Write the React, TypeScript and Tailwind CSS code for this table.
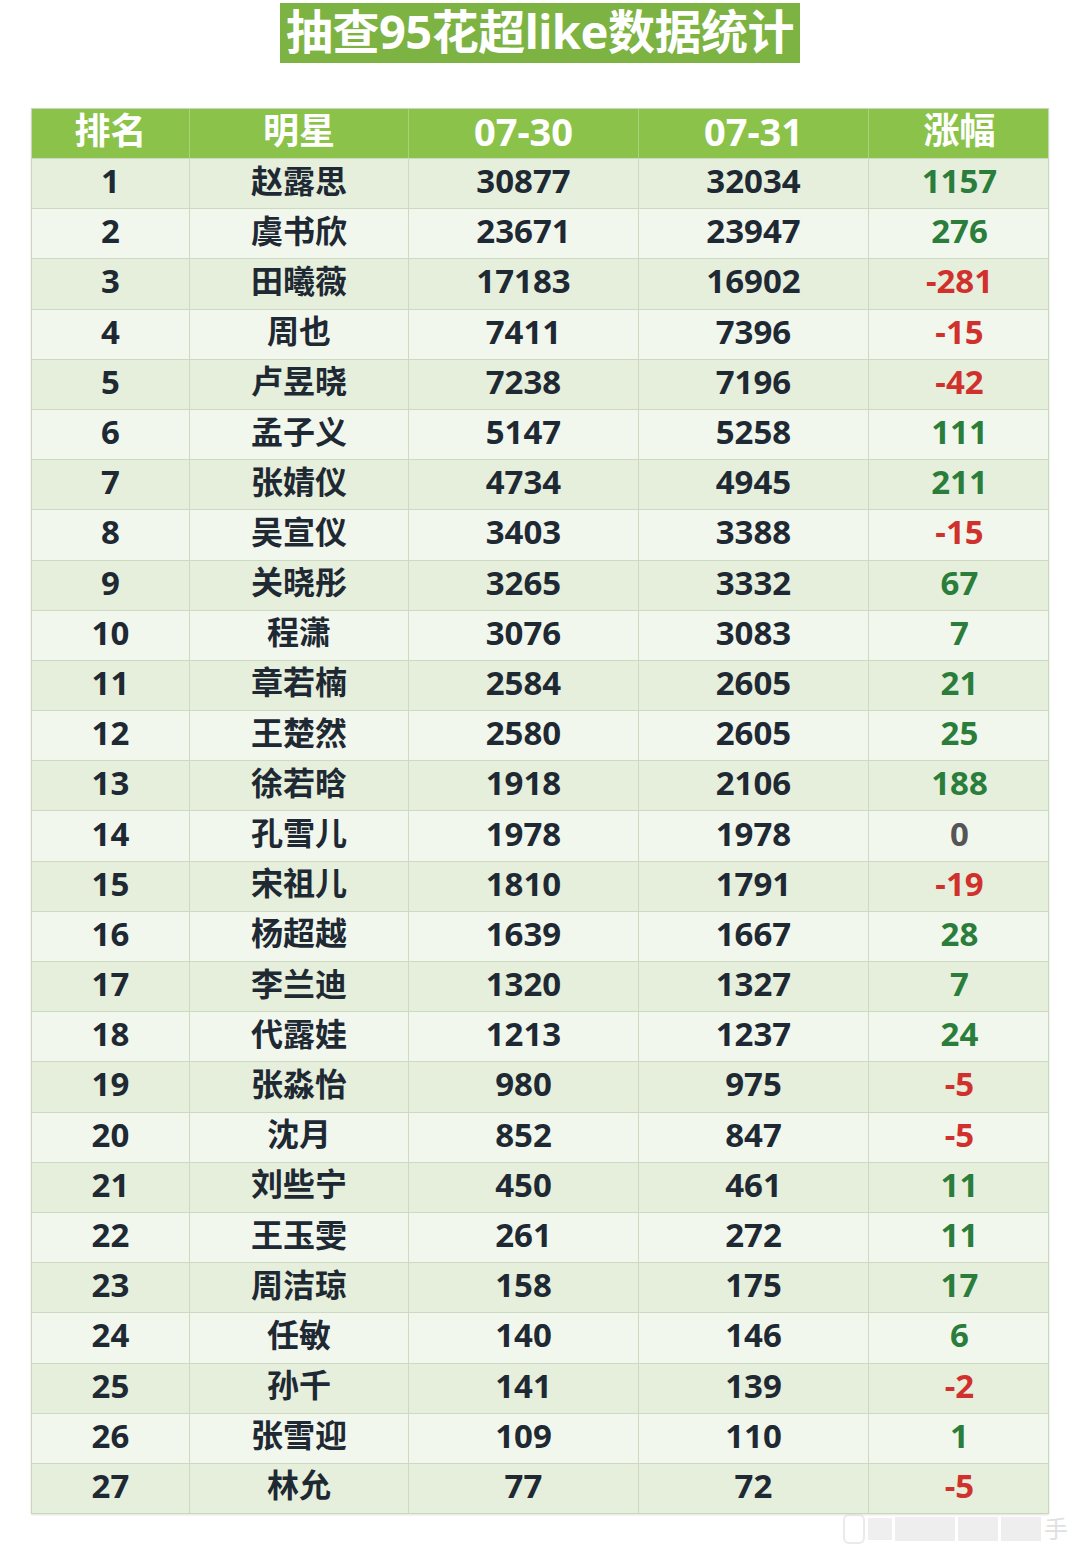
import React from "react";

type Row = [number, string, number, number, number];

const rows: Row[] = [
  [1, "赵露思", 30877, 32034, 1157],
  [2, "虞书欣", 23671, 23947, 276],
  [3, "田曦薇", 17183, 16902, -281],
  [4, "周也", 7411, 7396, -15],
  [5, "卢昱晓", 7238, 7196, -42],
  [6, "孟子义", 5147, 5258, 111],
  [7, "张婧仪", 4734, 4945, 211],
  [8, "吴宣仪", 3403, 3388, -15],
  [9, "关晓彤", 3265, 3332, 67],
  [10, "程潇", 3076, 3083, 7],
  [11, "章若楠", 2584, 2605, 21],
  [12, "王楚然", 2580, 2605, 25],
  [13, "徐若晗", 1918, 2106, 188],
  [14, "孔雪儿", 1978, 1978, 0],
  [15, "宋祖儿", 1810, 1791, -19],
  [16, "杨超越", 1639, 1667, 28],
  [17, "李兰迪", 1320, 1327, 7],
  [18, "代露娃", 1213, 1237, 24],
  [19, "张淼怡", 980, 975, -5],
  [20, "沈月", 852, 847, -5],
  [21, "刘些宁", 450, 461, 11],
  [22, "王玉雯", 261, 272, 11],
  [23, "周洁琼", 158, 175, 17],
  [24, "任敏", 140, 146, 6],
  [25, "孙千", 141, 139, -2],
  [26, "张雪迎", 109, 110, 1],
  [27, "林允", 77, 72, -5],
];

const font = { fontFamily: '"Noto Sans", "Noto Sans CJK SC", sans-serif' };

const cols = "grid grid-cols-[158px_219px_230px_230px_181px]";

function diffColor(d: number) {
  if (d > 0) return "text-[#2a7d3a]";
  if (d < 0) return "text-[#d0312d]";
  return "text-[#555555]";
}

const cell = "flex items-center justify-center pb-[6px] font-bold leading-none";

export default function App() {
  return (
    <div className="w-[1080px] h-[1552px] bg-white relative" style={font}>
      <div className="pt-[3px] flex justify-center">
        <div className="w-[520px] h-[60px] bg-[#7cb342] flex items-center justify-center pb-[4px]">
          <span className="text-white font-bold text-[47px] leading-none tracking-[-0.5px]">
            抽查95花超like数据统计
          </span>
        </div>
      </div>

      <div className="mt-[45px] ml-[31px] w-[1018px] border border-[#c9d7bb] shadow-[0_1px_2px_rgba(0,0,0,0.12)]">
        <div className={`${cols} h-[49px] bg-[#8bc34a]`}>
          {["排名", "明星", "07-30", "07-31", "涨幅"].map((h, i) => (
            <div
              key={h}
              className={`flex items-center justify-center pb-[5px] text-white font-bold leading-none ${
                i === 2 || i === 3 ? "text-[38px]" : "text-[36px]"
              } ${i < 4 ? "border-r border-[#a9d37a]" : ""}`}
            >
              {h}
            </div>
          ))}
        </div>
        {rows.map(([rank, name, a, b, d]) => (
          <div
            key={rank}
            className={`${cols} h-[50.2px] border-t border-[#cdd9c0] ${
              rank % 2 === 1 ? "bg-[#e6efdb]" : "bg-[#f2f7ed]"
            }`}
          >
            <div className={`${cell} border-r border-[#cdd9c0] text-[33px] text-[#1e2933]`}>{rank}</div>
            <div className={`${cell} border-r border-[#cdd9c0] text-[32px] text-[#1e2933]`}>{name}</div>
            <div className={`${cell} border-r border-[#cdd9c0] text-[33px] text-[#1e2933]`}>{a}</div>
            <div className={`${cell} border-r border-[#cdd9c0] text-[33px] text-[#1e2933]`}>{b}</div>
            <div className={`${cell} text-[33px] ${diffColor(d)}`}>{d}</div>
          </div>
        ))}
      </div>

      <div className="absolute right-[12px] bottom-[8px] flex items-center gap-[3px] opacity-60">
        <div className="w-[22px] h-[30px] rounded-[6px] border-2 border-[#dddddd]" />
        <div className="w-[24px] h-[22px] bg-[#e6e6e6]" />
        <div className="w-[60px] h-[24px] bg-[#e4e4e4]" />
        <div className="w-[40px] h-[24px] bg-[#e4e4e4]" />
        <div className="w-[40px] h-[24px] bg-[#e4e4e4]" />
        <span className="text-[24px] text-[#cccccc] leading-none">手</span>
      </div>
    </div>
  );
}
